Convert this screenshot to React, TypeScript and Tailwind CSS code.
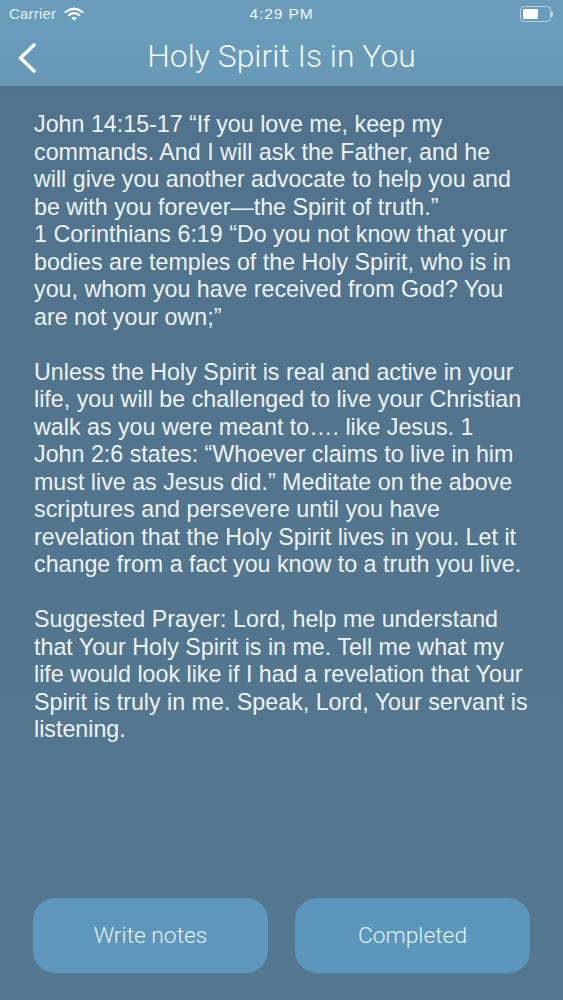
import React from "react";

const F = { fontFamily: '"Liberation Sans", Arial, sans-serif' };
const L = { fontFamily: 'Roboto, "Liberation Sans", Arial, sans-serif' };

export default function App() {
  return (
    <div className="w-[563px] h-[1000px] overflow-hidden flex flex-col bg-gradient-to-b from-[#50728c] to-[#557891] text-white" style={F}>
      <div className="h-[87px] shrink-0 bg-gradient-to-b from-[#6a9dbc] to-[#6798b8] border-b border-[#55768f] flex flex-col">
        <div className="h-[28px] px-[9px] flex items-center justify-between text-[15px] relative">
          <div className="flex items-center gap-[8px]">
            <span className="text-[#e4eef4] tracking-[0.2px]">Carrier</span>
            <svg width="20" height="15" viewBox="0 0 20 15" fill="none" stroke="#fff" strokeWidth="2.2" strokeLinecap="round">
              <path d="M1.5 5 Q10 -1.5 18.5 5" />
              <path d="M4.8 8.2 Q10 4 15.2 8.2" />
              <path d="M10 13 L7.9 10.9 Q10 9.5 12.1 10.9 Z" fill="#fff" strokeWidth="1" strokeLinejoin="round" />
            </svg>
          </div>
          <span className="absolute left-0 right-0 text-center text-[15.5px] tracking-[0.9px] text-[#f2f7fa]">4:29 PM</span>
          <div className="flex items-center mr-[1px]">
            <div className="w-[31px] h-[16px] rounded-[4px] border border-[#b9d2e2] p-[2px]">
              <div className="w-[15px] h-full bg-white rounded-[1px]" />
            </div>
            <div className="w-[2px] h-[6px] rounded-r-[2px] bg-[#b9d2e2]" />
          </div>
        </div>
        <div className="flex-1 flex items-center relative">
          <svg className="absolute left-[16px] top-[14px]" width="22" height="32" viewBox="0 0 22 32" fill="none"><path d="M18 3 L4.5 16 L18 29" stroke="#f6fafc" strokeWidth="3.8" strokeLinecap="round" strokeLinejoin="round" /></svg>
          <div className="w-full text-center text-[31.9px] leading-none font-light text-[#f4f8fb]" style={L}>Holy Spirit Is in You</div>
        </div>
      </div>
      <div className="flex-1 flex flex-col justify-between pt-[24px] pb-[27px] px-[34px]">
        <div className="text-[23.25px] leading-[27.5px] text-[#eef3f6]">
          <p>John 14:15-17 “If you love me, keep my<br />commands. And I will ask the Father, and he<br />will give you another advocate to help you and<br />be with you forever—the Spirit of truth.”<br />1 Corinthians 6:19 “Do you not know that your<br />bodies are temples of the Holy Spirit, who is in<br />you, whom you have received from God? You<br />are not your own;”</p>
          <p className="mt-[27.5px]">Unless the Holy Spirit is real and active in your<br />life, you will be challenged to live your Christian<br />walk as you were meant to…. like Jesus. 1<br />John 2:6 states: “Whoever claims to live in him<br />must live as Jesus did.” Meditate on the above<br />scriptures and persevere until you have<br />revelation that the Holy Spirit lives in you. Let it<br />change from a fact you know to a truth you live.</p>
          <p className="mt-[27.5px]">Suggested Prayer: Lord, help me understand<br />that Your Holy Spirit is in me. Tell me what my<br />life would look like if I had a revelation that Your<br />Spirit is truly in me. Speak, Lord, Your servant is<br />listening.</p>
        </div>
        <div className="flex justify-between -mx-px">
          <div className="w-[235px] h-[75px] rounded-[22px] bg-[#5d97bb] flex items-center justify-center pt-[2px] text-[22.8px] font-light text-[#e2f0f7]" style={L}>Write notes</div>
          <div className="w-[235px] h-[75px] rounded-[22px] bg-[#5b97bc] flex items-center justify-center pt-[2px] text-[22.8px] font-light text-[#e2f0f7]" style={L}>Completed</div>
        </div>
      </div>
    </div>
  );
}
